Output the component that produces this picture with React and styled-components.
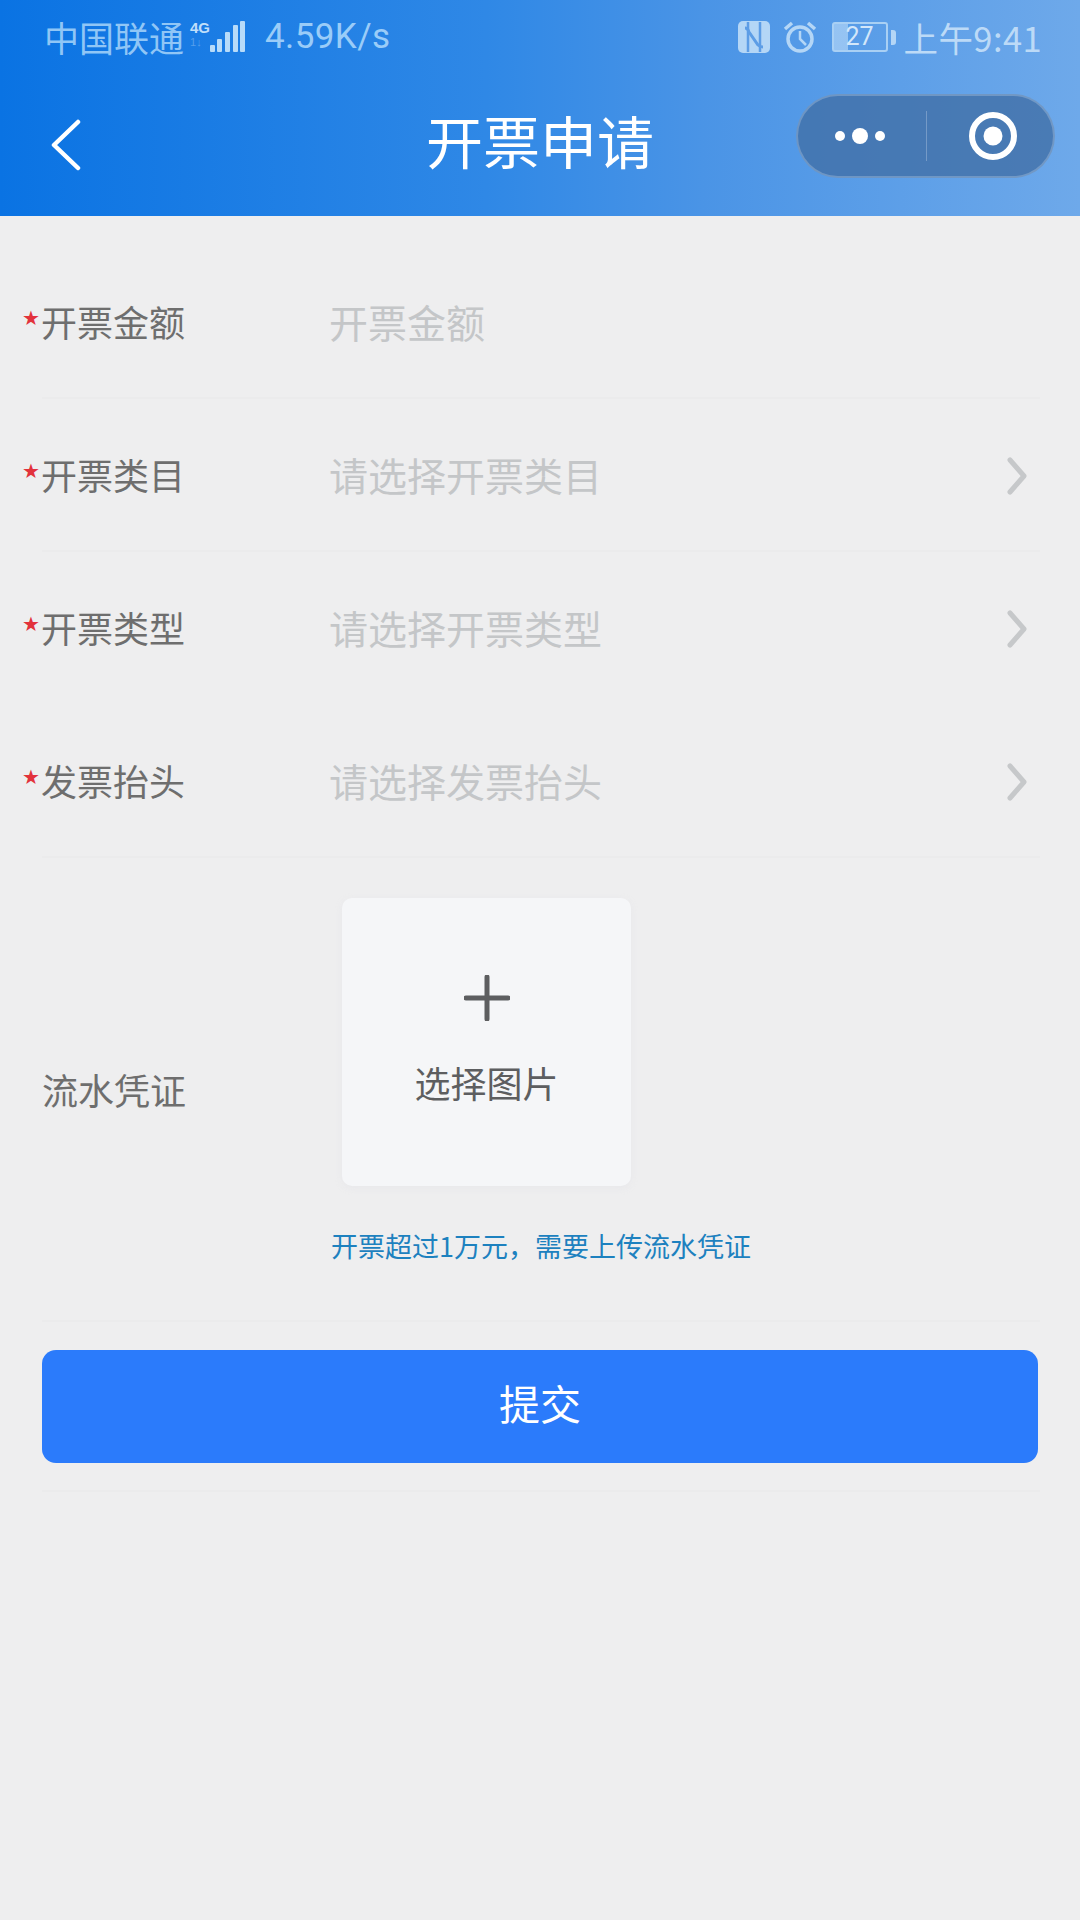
import React from "react";
import styled, { createGlobalStyle } from "styled-components";

const CJK = `"Noto Sans CJK SC", "Noto Sans", sans-serif`;

const Global = createGlobalStyle`
  html, body { margin: 0; padding: 0; background: #eeeeef; }
  * { box-sizing: border-box; }
  body { font-family: ${CJK}; }
`;

const Page = styled.div`
  width: 1080px;
  min-height: 1920px;
  background: #eeeeef;
  display: flex;
  flex-direction: column;
`;

const Header = styled.header`
  height: 216px;
  background: linear-gradient(90deg, #0a73e3 0%, #2f88e6 45%, #4a94e6 65%, #6ea9ea 100%);
  display: flex;
  flex-direction: column;
`;

const StatusBar = styled.div`
  height: 74px;
  padding: 0 38px 0 44px;
  display: flex;
  align-items: center;
  justify-content: space-between;
  color: #9ccdf8;
`;

const StatusGroup = styled.div`
  display: flex;
  align-items: center;
`;

const Carrier = styled.span`
  font-size: 35px;
  line-height: 40px;
  color: #90c6f6;
`;

const NetLabels = styled.span`
  width: 22px;
  margin: -6px 0 0 6px;
  display: flex;
  flex-direction: column;
  font: bold 15px/16px "Liberation Sans", sans-serif;
  color: #c0dffa;
`;

const NetDown = styled.span`
  font-size: 11px;
  font-weight: normal;
  line-height: 13px;
  opacity: 0.35;
`;

const Speed = styled.span`
  margin-left: 19px;
  font: 35px/40px Roboto, sans-serif;
  letter-spacing: 0.4px;
  color: #9accf8;
`;

const Battery = styled.div`
  width: 56px;
  height: 30px;
  margin-left: 15px;
  border: 2px solid #a9d0f4;
  border-radius: 3px;
  display: flex;
  align-items: center;
  justify-content: center;
  font: 25px/26px Roboto, sans-serif;
  color: #d3e7fa;
  background: linear-gradient(90deg, rgba(165, 205, 245, 0.8) 27%, transparent 27%);
`;

const BatteryCap = styled.span`
  width: 5px;
  height: 15px;
  margin-left: 3px;
  border-radius: 0 3px 3px 0;
  background: #b4d6f6;
`;

const Clock = styled.span`
  margin-left: 8px;
  font-size: 34.5px;
  line-height: 40px;
  color: #bcdaf7;
  letter-spacing: 0.4px;
`;

const NavBar = styled.div`
  flex: 1;
  padding: 0 25px 12px 25px;
  display: grid;
  grid-template-columns: minmax(0, 1fr) auto minmax(0, 1fr);
  align-items: center;
`;

const BackIcon = styled.svg`
  width: 32px;
  height: 52px;
  margin: 12px 0 0 25px;
`;

const Title = styled.h1`
  margin: 0;
  font-size: 57px;
  line-height: 76px;
  font-weight: 400;
  color: #ffffff;
  white-space: nowrap;
`;

const Capsule = styled.div`
  justify-self: end;
  width: 259px;
  height: 84px;
  margin-bottom: 6px;
  border-radius: 42px;
  border: 2px solid rgba(255, 255, 255, 0.22);
  background: rgba(64, 110, 165, 0.78);
  display: grid;
  grid-template-columns: 127px 2px 1fr;
  align-items: center;
  justify-items: center;
`;

const CapsuleRule = styled.span`
  width: 1px;
  height: 50px;
  background: rgba(255, 255, 255, 0.25);
`;

const Form = styled.main`
  padding: 30px 40px 0 42px;
  display: flex;
  flex-direction: column;
`;

const Row = styled.div`
  height: ${(p) => p.$height || 153}px;
  display: flex;
  align-items: center;
  border-bottom: 2px solid ${(p) => (p.$plain ? "transparent" : "#ebebec")};
`;

const Star = styled.span`
  width: 18px;
  margin: -8px 1px 0 -20px;
  font: 20px/22px "DejaVu Sans", sans-serif;
  color: #e2323c;
`;

const Label = styled.span`
  width: 289px;
  flex: none;
  font-size: 36px;
  line-height: 48px;
  color: #6e6e6e;
  margin-top: -1px;
`;

const Placeholder = styled.span`
  flex: 1;
  margin: -2px 0 0 -1px;
  font-size: 39px;
  line-height: 50px;
  color: #c4c6c8;
`;

const Chevron = styled.svg`
  width: 22px;
  height: 40px;
  margin: 2px 12px 0 0;
  flex: none;
`;

const UploadColumn = styled.div`
  display: flex;
  flex-direction: column;
  padding-bottom: 16px;
`;

const UploadCard = styled.div`
  width: 289px;
  height: 288px;
  margin-left: 11px;
  border-radius: 10px;
  background: #f5f6f8;
  box-shadow: 0 2px 6px rgba(230, 230, 233, 0.7);
  display: flex;
  flex-direction: column;
  align-items: center;
  padding-top: 77px;
  color: #5d5e60;
`;

const UploadText = styled.span`
  margin-top: 37px;
  font-size: 36px;
  line-height: 48px;
`;

const Hint = styled.p`
  margin: 41px 0 0;
  height: 38px;
  font-size: 27px;
  line-height: 38px;
  color: #1d81bf;
  white-space: nowrap;
`;

const ButtonRow = styled.div`
  padding: 28px 2px 27px 0;
  border-bottom: 2px solid #ebebec;
`;

const Submit = styled.button`
  display: block;
  width: 100%;
  height: 113px;
  border: 0;
  border-radius: 14px;
  background: #2b7bfb;
  color: #ffffff;
  font-family: ${CJK};
  font-size: 41px;
  padding: 0 0 9px;
`;

const Signal = () => (
  <svg width="38" height="34" viewBox="0 0 38 34" style={{ marginLeft: -4 }}>
    <g fill="#b7dbf9">
      <rect x="2" y="25" width="5" height="7" rx="1" />
      <rect x="9" y="19" width="5" height="13" rx="1" />
      <rect x="17" y="12" width="5" height="20" rx="1" />
      <rect x="25" y="5" width="5" height="27" rx="1" />
      <rect x="32" y="1" width="5" height="31" rx="1" />
    </g>
  </svg>
);

const NfcIcon = () => (
  <svg width="34" height="34" viewBox="0 0 34 34" style={{ marginRight: 12 }}>
    <rect x="1" y="1" width="32" height="32" rx="5" fill="#b4d6f6" />
    <path d="M11 2v30M23 2v30" stroke="#5d9de6" strokeWidth="2.5" fill="none" />
    <path d="M8 8c3 0 3 2 4 4l9 13c1 1 2 2 5 2" stroke="#5d9de6" strokeWidth="3" fill="none" />
  </svg>
);

const AlarmIcon = () => (
  <svg width="34" height="34" viewBox="0 0 34 34" fill="none" stroke="#b4d6f6">
    <circle cx="17" cy="19" r="12" strokeWidth="3.5" />
    <path d="M17 11v8l6 6" strokeWidth="2.5" />
    <path d="M2 9l7-6M32 9l-7-6" strokeWidth="3.5" />
  </svg>
);

const DotsIcon = () => (
  <svg width="56" height="20" viewBox="0 0 56 20" fill="#fff" style={{ marginLeft: -4 }}>
    <circle cx="8" cy="10" r="5" />
    <circle cx="28" cy="10" r="8" />
    <circle cx="48" cy="10" r="5" />
  </svg>
);

const RecordIcon = () => (
  <svg width="50" height="50" viewBox="0 0 50 50" fill="none" style={{ marginLeft: 6 }}>
    <circle cx="25" cy="25" r="21" stroke="#fff" strokeWidth="6" />
    <circle cx="25" cy="25" r="9.5" fill="#fff" />
  </svg>
);

const PlusIcon = () => (
  <svg width="46" height="46" viewBox="0 0 46 46" fill="none">
    <path d="M23 2v42M2 23h42" stroke="#5d5e60" strokeWidth="5" strokeLinecap="round" />
  </svg>
);

const Arrow = () => (
  <Chevron viewBox="0 0 22 40" fill="none">
    <path d="M4 4 L18 20 L4 36" stroke="#c6c8ca" strokeWidth="5" strokeLinecap="round" strokeLinejoin="round" />
  </Chevron>
);

const fields = [
  { label: "开票金额", placeholder: "开票金额" },
  { label: "开票类目", placeholder: "请选择开票类目", arrow: true },
  { label: "开票类型", placeholder: "请选择开票类型", arrow: true, plain: true },
  { label: "发票抬头", placeholder: "请选择发票抬头", arrow: true },
];

export default function App() {
  return (
    <Page>
      <Global />
      <Header>
        <StatusBar>
          <StatusGroup>
            <Carrier>中国联通</Carrier>
            <NetLabels>
              4G
              <NetDown>1↓</NetDown>
            </NetLabels>
            <Signal />
            <Speed>4.59K/s</Speed>
          </StatusGroup>
          <StatusGroup>
            <NfcIcon />
            <AlarmIcon />
            <Battery>27</Battery>
            <BatteryCap />
            <Clock>上午9:41</Clock>
          </StatusGroup>
        </StatusBar>
        <NavBar>
          <BackIcon viewBox="0 0 32 52" fill="none">
            <path d="M28 3 L4 26 L28 49" stroke="#fff" strokeWidth="4.5" strokeLinecap="round" strokeLinejoin="round" />
          </BackIcon>
          <Title>开票申请</Title>
          <Capsule>
            <DotsIcon />
            <CapsuleRule />
            <RecordIcon />
          </Capsule>
        </NavBar>
      </Header>
      <Form>
        {fields.map((f) => (
          <Row key={f.label} $plain={f.plain}>
            <Star>★</Star>
            <Label>{f.label}</Label>
            <Placeholder>{f.placeholder}</Placeholder>
            {f.arrow && <Arrow />}
          </Row>
        ))}
        <Row $height={464}>
          <Label>流水凭证</Label>
          <UploadColumn>
            <UploadCard>
              <PlusIcon />
              <UploadText>选择图片</UploadText>
            </UploadCard>
            <Hint>开票超过1万元，需要上传流水凭证</Hint>
          </UploadColumn>
        </Row>
        <ButtonRow>
          <Submit>提交</Submit>
        </ButtonRow>
      </Form>
    </Page>
  );
}
